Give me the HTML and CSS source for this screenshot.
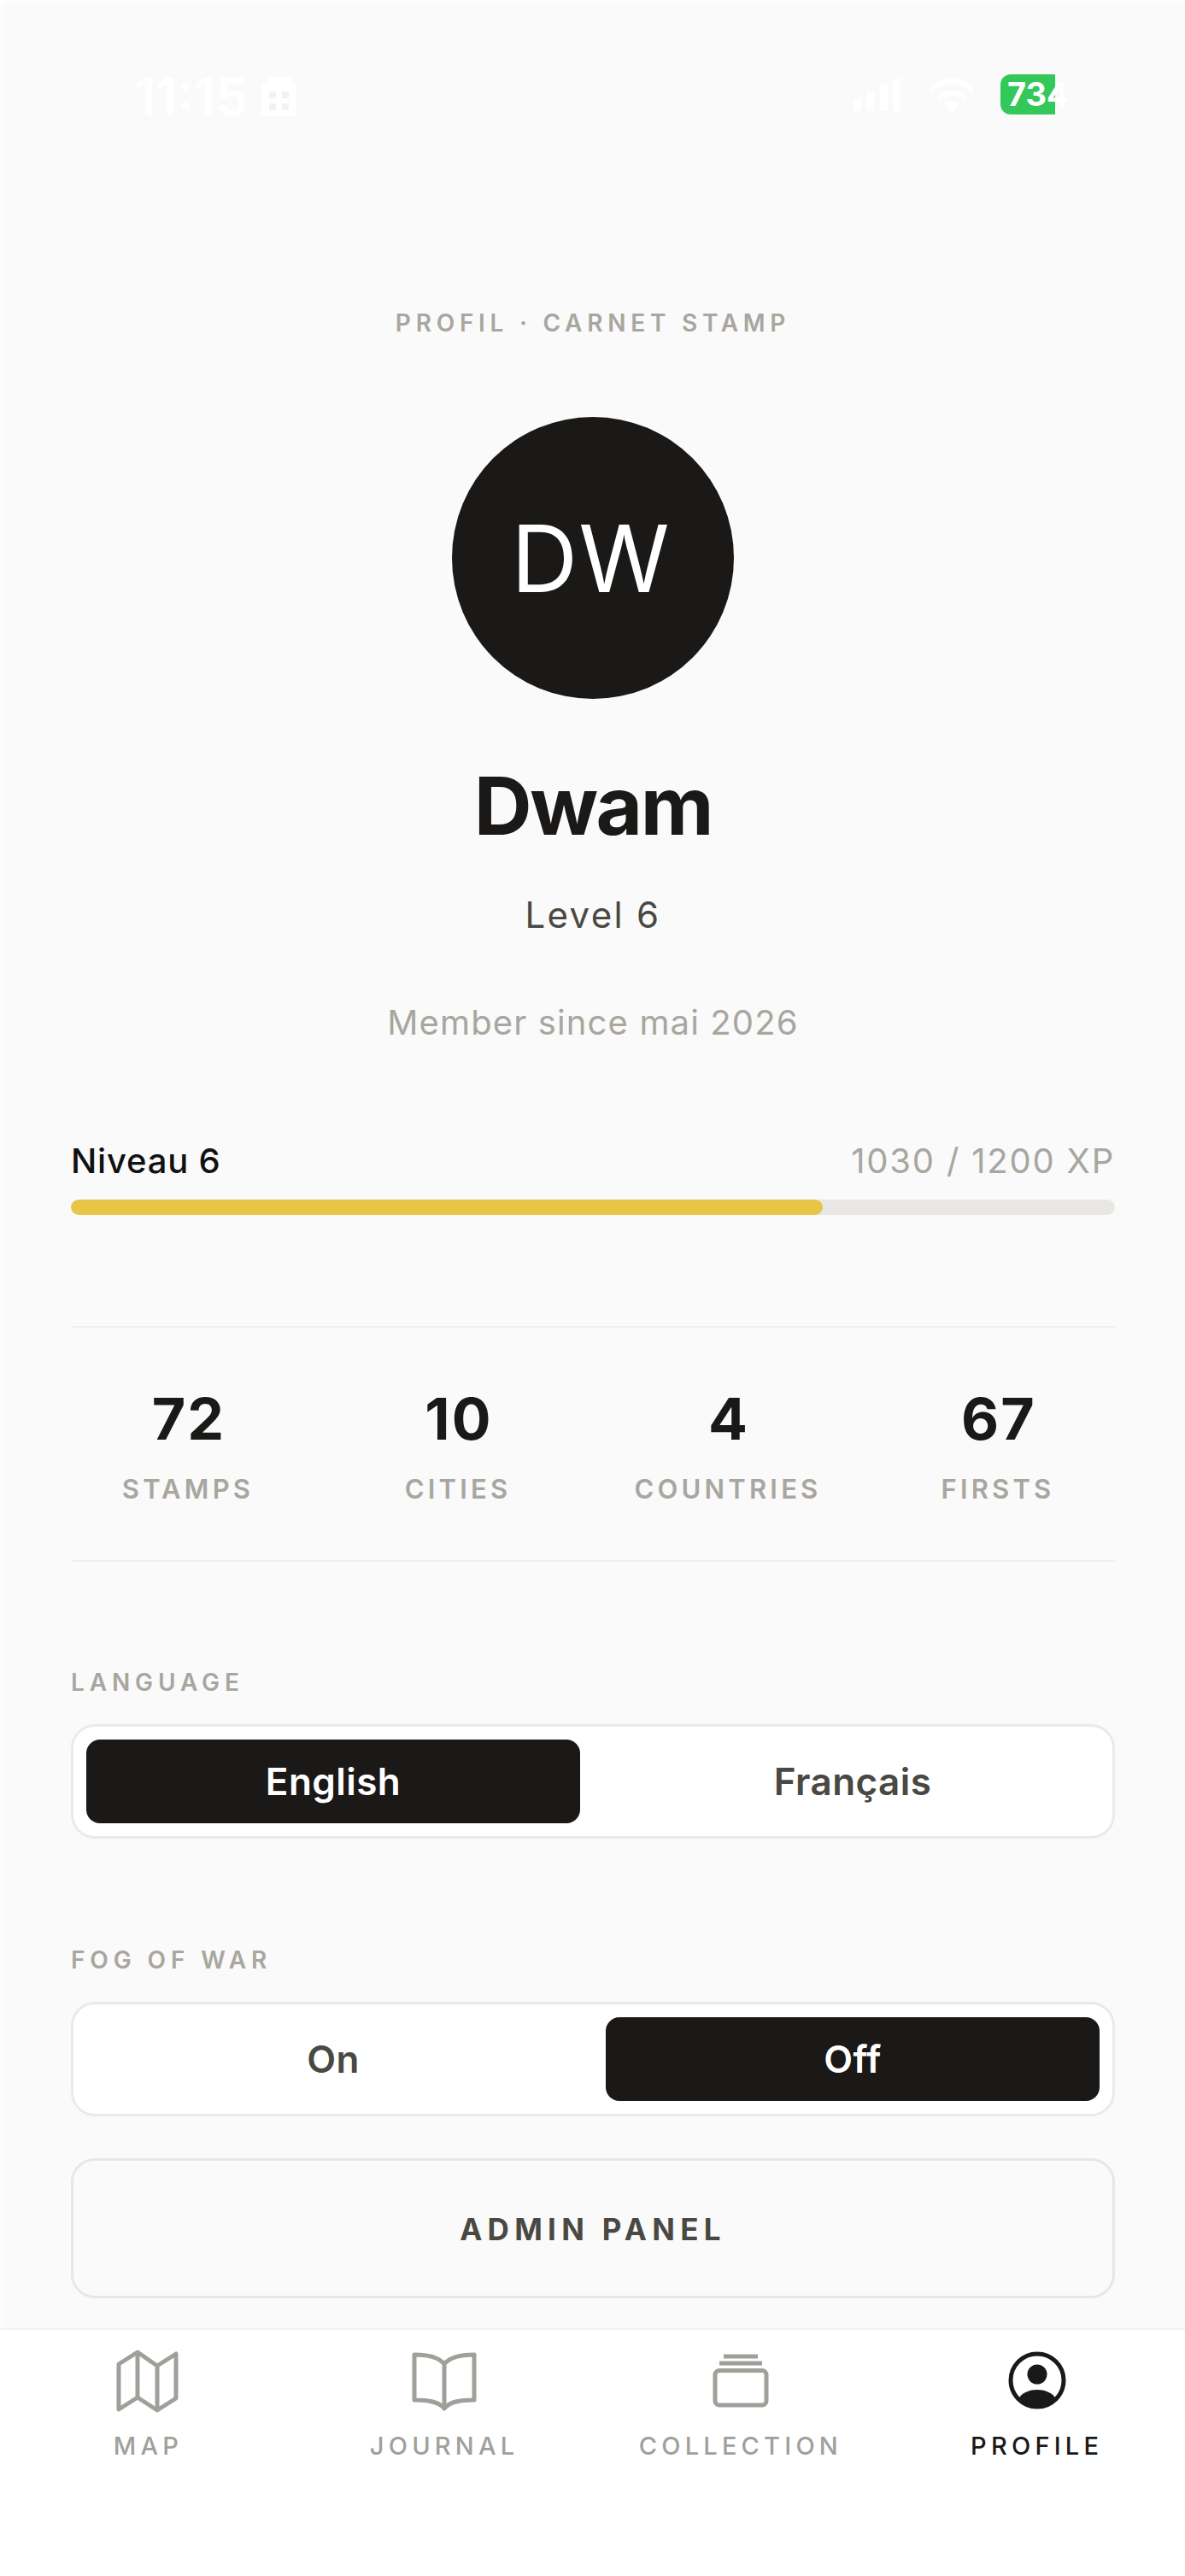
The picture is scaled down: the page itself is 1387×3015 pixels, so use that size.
FILE: index.html
```html
<!DOCTYPE html>
<html lang="en">
<head>
    <meta charset="utf-8">
    <title>Profil</title>
    <link rel="stylesheet" href="styles.css">
</head>
<body>
    <div class="screen">
        <div class="status-bar">
            <div class="status-left">
                <span class="status-time">11:15</span>
                <svg class="status-sim" width="47" height="52" viewBox="0 0 47 52"><path d="M3 10h41v39H3z" fill="#fff"/><path d="M10 3h27v7H10z" fill="#fff"/><path d="M12 20h8v8h-8zM27 20h8v8h-8zM12 34h8v8h-8zM27 34h8v8h-8z" fill="#f2f2f1"/></svg>
            </div>
            <div class="status-right">
                <svg width="60" height="42" viewBox="0 0 60 42"><path d="M2 26h9v14H2zM17 18h9v22h-9zM33 9h9v31h-9zM48 2h9v38h-9z" fill="#fff"/></svg>
                <svg width="54" height="42" viewBox="0 0 54 42" fill="none" stroke="#fff" stroke-width="6" stroke-linecap="round"><path d="M4 14c13-12 33-12 46 0"/><path d="M13 24c8-7 20-7 28 0"/><path d="M27 38l-5-6c3-2 7-2 10 0z" fill="#fff"/></svg>
                <span class="status-battery">734</span>
            </div>
        </div>

        <main class="profile">
            <p class="eyebrow">PROFIL · CARNET STAMP</p>
            <div class="avatar">DW</div>
            <h1 class="name">Dwam</h1>
            <p class="level">Level 6</p>
            <p class="member">Member since mai 2026</p>

            <div class="xp-row">
                <span class="xp-level">Niveau 6</span>
                <span class="xp-count">1030 / 1200 XP</span>
            </div>
            <div class="xp-track"><div class="xp-fill" style="width: 72%"></div></div>

            <div class="stats">
                <div class="stat"><div class="stat-value">72</div><div class="stat-label">STAMPS</div></div>
                <div class="stat"><div class="stat-value">10</div><div class="stat-label">CITIES</div></div>
                <div class="stat"><div class="stat-value">4</div><div class="stat-label">COUNTRIES</div></div>
                <div class="stat"><div class="stat-value">67</div><div class="stat-label">FIRSTS</div></div>
            </div>

            <p class="setting-label setting-language">LANGUAGE</p>
            <div class="segmented">
                <button class="segment active">English</button>
                <button class="segment">Français</button>
            </div>

            <p class="setting-label setting-fog">FOG OF WAR</p>
            <div class="segmented">
                <button class="segment">On</button>
                <button class="segment active">Off</button>
            </div>

            <button class="admin-button">ADMIN PANEL</button>
        </main>

        <nav class="tab-bar">
            <a class="tab">
                <svg width="76" height="77" viewBox="-2 -1 76 77" fill="none" stroke="currentColor" stroke-width="5" stroke-linejoin="round"><path d="M24 2L47 18 69 4V56L47 70 24 55 2 69V16Z"/><path d="M24 2V55M47 18V70"/></svg>
                <span>MAP</span>
            </a>
            <a class="tab">
                <svg width="76" height="77" viewBox="0 -4 76 77" fill="none" stroke="currentColor" stroke-width="5" stroke-linejoin="round"><path d="M38 13C32 5 20 2 3 2V55C20 55 32 57 38 65 44 57 56 55 73 55V2C56 2 44 5 38 13Z"/><path d="M38 13V65"/></svg>
                <span>JOURNAL</span>
            </a>
            <a class="tab">
                <svg width="76" height="77" viewBox="0 -4 76 77" fill="none" stroke="currentColor" stroke-width="5"><rect x="8" y="20.5" width="60" height="40.5" rx="5"/><path d="M13 12H63M18 4H58"/></svg>
                <span>COLLECTION</span>
            </a>
            <a class="tab active">
                <svg width="76" height="77" viewBox="0 -4 76 77"><circle cx="38" cy="32" r="31" fill="none" stroke="currentColor" stroke-width="5"/><circle cx="38" cy="25" r="11.5" fill="currentColor"/><path d="M15 55C20 46 29 43 38 43S56 46 61 55C55 61 47 64 38 64S21 61 15 55Z" fill="currentColor"/></svg>
                <span>PROFILE</span>
            </a>
        </nav>
    </div>
</body>
</html>
```

FILE: styles.css
```css
* {
    box-sizing: border-box;
}

html, body {
    margin: 0;
    padding: 0;
}

body {
    background-color: #fafafa;
    font-family: 'Inter', 'Liberation Sans', sans-serif;
    color: #1a1917;
}

p, h1 {
    margin: 0;
}

.screen {
    width: 1387px;
    height: 3015px;
    display: flex;
    flex-direction: column;
    overflow: hidden;
    box-shadow: inset 4px 4px 0 #fdfdfd;
}

/* status bar, white on the pale page */
.status-bar {
    height: 150px;
    flex-shrink: 0;
    padding: 87px 152px 0 157px;
    display: flex;
    justify-content: space-between;
    align-items: flex-start;
}

.status-left {
    display: flex;
    align-items: center;
    gap: 13px;
}

.status-time {
    font-size: 60px;
    line-height: 52px;
    font-weight: 600;
    color: #fff;
}

.status-right {
    display: flex;
    align-items: center;
    gap: 30px;
}

.status-battery {
    width: 64px;
    height: 47px;
    flex-shrink: 0;
    padding-left: 8px;
    background-color: #34c759;
    border-radius: 12px 0 0 12px;
    color: #fff;
    font-size: 38px;
    line-height: 47px;
    font-weight: 700;
    white-space: nowrap;
}

.profile {
    flex: 1;
    padding: 208px 82px 0 83px;
    text-align: center;
}

.eyebrow {
    font-size: 28px;
    line-height: 40px;
    font-weight: 600;
    letter-spacing: 0.205em;
    color: #a8a69f;
}

.avatar {
    width: 330px;
    height: 330px;
    margin: 90px auto 0;
    padding-right: 5px;
    border-radius: 50%;
    background-color: #1a1917;
    color: #fff;
    font-size: 108px;
    font-weight: 400;
    letter-spacing: 0.01em;
    display: flex;
    align-items: center;
    justify-content: center;
}

.name {
    margin-top: 70px;
    font-size: 94px;
    line-height: 110px;
    font-weight: 700;
    letter-spacing: -0.025em;
}

.level {
    margin-top: 45px;
    font-size: 42px;
    line-height: 56px;
    letter-spacing: 0.055em;
    color: #4a4843;
}

.member {
    margin-top: 73px;
    font-size: 40px;
    line-height: 50px;
    letter-spacing: 0.028em;
    color: #a8a69f;
}

.xp-row {
    margin-top: 112px;
    display: flex;
    justify-content: space-between;
    line-height: 50px;
    font-size: 40px;
}

.xp-level {
    font-weight: 500;
    letter-spacing: 0.02em;
    color: #111;
}

.xp-count {
    letter-spacing: 0.045em;
    color: #a8a69f;
}

.xp-track {
    height: 18px;
    margin-top: 20px;
    border-radius: 9px;
    background-color: #e8e7e4;
    overflow: hidden;
}

.xp-fill {
    height: 100%;
    border-radius: 9px;
    background-color: #e8c547;
}

.stats {
    margin-top: 130px;
    padding: 66px 0 68px;
    border-top: 2px solid #f0efec;
    border-bottom: 2px solid #f0efec;
    display: grid;
    grid-template-columns: repeat(4, 1fr);
    column-gap: 42px;
}

.stat-value {
    padding-left: 2px;
    font-size: 68px;
    line-height: 80px;
    font-weight: 700;
    letter-spacing: 0.03em;
}

.stat-label {
    margin-top: 28px;
    font-size: 31px;
    line-height: 30px;
    font-weight: 600;
    letter-spacing: 0.135em;
    color: #a8a69f;
}

.setting-label {
    font-size: 28px;
    line-height: 30px;
    font-weight: 600;
    letter-spacing: 0.21em;
    color: #a8a69f;
    text-align: left;
}

.setting-language {
    margin-top: 126px;
}

.setting-fog {
    margin-top: 127px;
}

.segmented {
    height: 134px;
    margin-top: 34px;
    padding: 15px;
    background-color: #fff;
    border: 3px solid #eceae7;
    border-radius: 28px;
    display: grid;
    grid-template-columns: 1fr 1fr;
    column-gap: 30px;
}

.segment {
    border: none;
    border-radius: 16px;
    background-color: transparent;
    color: #4a4843;
    font-family: inherit;
    font-size: 44px;
    font-weight: 600;
    letter-spacing: 0.01em;
}

.segment.active {
    background-color: #1a1917;
    color: #fff;
}

.admin-button {
    width: 100%;
    height: 164px;
    margin-top: 49px;
    padding-top: 2px;
    background-color: transparent;
    border: 3px solid #e8e7e3;
    border-radius: 28px;
    color: #4a4843;
    font-family: inherit;
    font-size: 35px;
    font-weight: 700;
    letter-spacing: 0.18em;
}

.tab-bar {
    height: 290px;
    flex-shrink: 0;
    padding-top: 23px;
    background-color: #fff;
    border-top: 2px solid #f3f2f0;
    display: grid;
    grid-template-columns: repeat(4, 1fr);
    align-items: start;
}

.tab {
    display: flex;
    flex-direction: column;
    align-items: center;
    color: #a0a09b;
}

.tab span {
    margin-top: 21px;
    font-size: 29px;
    line-height: 30px;
    font-weight: 500;
    letter-spacing: 0.18em;
}

.tab.active {
    color: #1a1917;
}
```
